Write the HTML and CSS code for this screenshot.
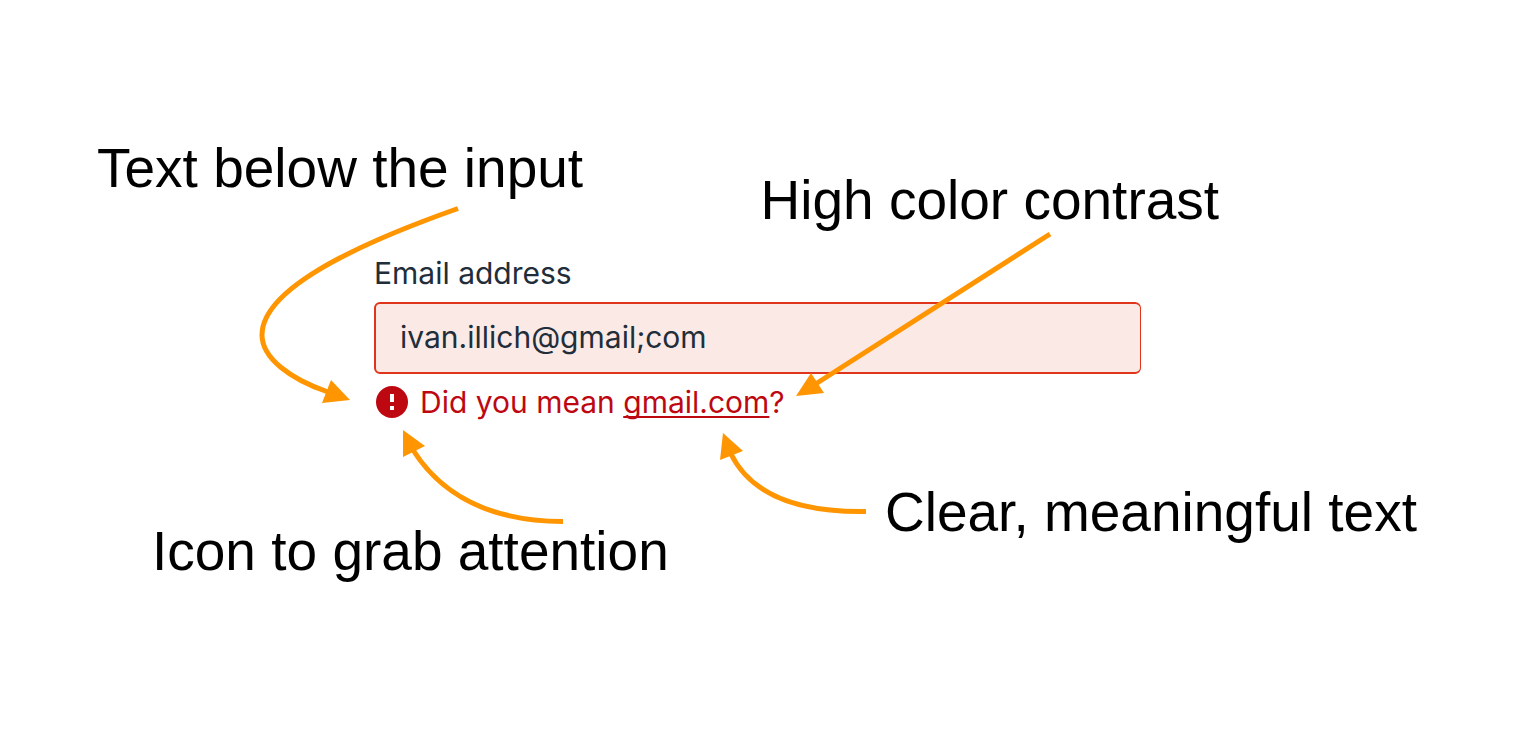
FILE: index.html
```html
<!DOCTYPE html>
<html lang="en">
<head>
<meta charset="utf-8">
<meta name="viewport" content="width=device-width, initial-scale=1">
<title>Anatomy of an error message</title>
<link rel="stylesheet" href="styles.css">
</head>
<body>
<main class="figure">
  <div class="captions captions-top">
    <p class="caption">Text below the input</p>
    <p class="caption caption-lower">High color contrast</p>
  </div>
  <form class="field">
    <label class="label" for="email">Email address</label>
    <input class="input" id="email" type="text" value="ivan.illich@gmail;com" aria-invalid="true" aria-describedby="email-error">
    <p class="error" id="email-error">
      <svg class="error-icon" viewBox="0 0 32 32" aria-hidden="true">
        <circle cx="16" cy="16" r="16" fill="#be0811"/>
        <path d="M14 8h4v8h-4zM14 20h4v4h-4z" fill="#fff"/>
      </svg>
      <span>Did you mean <a class="suggestion" href="#email">gmail.com</a>?</span>
    </p>
  </form>
  <div class="captions captions-bottom">
    <p class="caption caption-lower">Icon to grab attention</p>
    <p class="caption">Clear, meaningful text</p>
  </div>
  <svg class="arrows" viewBox="0 0 1538 746" aria-hidden="true">
    <g fill="none" stroke="#ff9500" stroke-width="5">
      <path d="M458 208.500C400 229 262 280 262 335C262 358 290 379 328 392"/>
      <path d="M1050 234L814 385"/>
      <path d="M563 521.500Q458 521 413 450"/>
      <path d="M866 511.500Q760 513 731 454"/>
    </g>
    <g fill="#ff9500">
      <path d="M350 400L331 380L322 403Z"/>
      <path d="M796 396L811 373L824 393Z"/>
      <path d="M403 430L425 446L403 457Z"/>
      <path d="M723 433L743 451L720 460Z"/>
    </g>
  </svg>
</main>
</body>
</html>
```
FILE: styles.css
```css
* {
  box-sizing: border-box;
}

body {
  margin: 0;
  background: #fff;
}

.figure {
  position: relative;
  max-width: 1538px;
  margin: 0 auto;
  padding: 136px 0 160px;
}

.captions {
  display: grid;
  color: #000;
  font: 55px/64px "Liberation Sans", Arial, sans-serif;
}

.captions-top {
  grid-template-columns: 664fr 778fr;
  padding-left: 97px;
}

.captions-bottom {
  grid-template-columns: 733fr 653fr;
  padding-left: 152px;
  margin-top: 60px;
}

.caption {
  margin: 0;
  white-space: nowrap;
}

.caption-lower {
  padding-top: 32px;
}

.captions-bottom .caption-lower {
  padding-top: 39px;
}

.field {
  display: flex;
  flex-direction: column;
  width: calc(50% - 2px);
  margin: 23px 0 0 374px;
  color: #222d3a;
  font: 30px/36px Inter, "Noto Sans", sans-serif;
}

.input {
  height: 72px;
  margin-top: 11px;
  padding: 0 24px 2px;
  border: 2px solid #e0351b;
  border-right-width: 1px;
  border-radius: 6px;
  background: #fbe9e6;
  color: inherit;
  font: inherit;
  outline: none;
}

.error {
  display: flex;
  align-items: center;
  gap: 12px;
  margin: 10px 0 0;
  padding-left: 2px;
  color: #be0811;
}

.error-icon {
  flex: none;
  width: 32px;
  height: 32px;
}

.suggestion {
  color: inherit;
  text-decoration: underline;
  text-decoration-thickness: 2px;
  text-decoration-skip-ink: none;
  text-underline-offset: 3px;
}

.arrows {
  position: absolute;
  top: 0;
  left: 0;
  width: 100%;
  pointer-events: none;
}
```
